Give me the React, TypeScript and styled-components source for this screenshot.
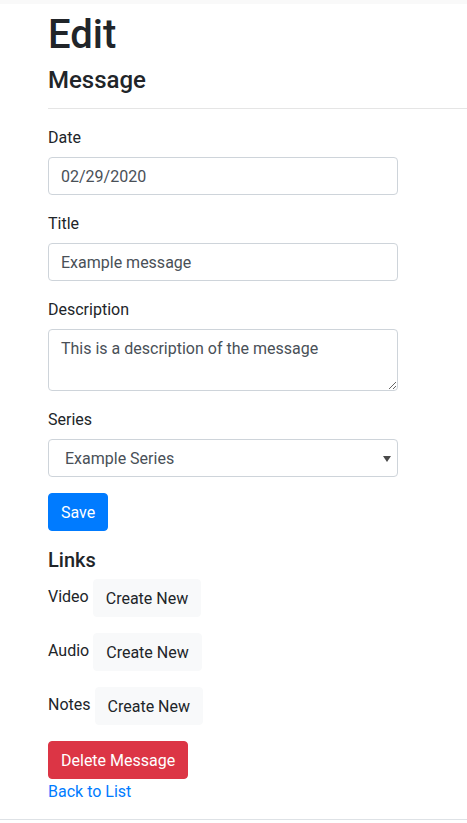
import React from 'react'
import styled, { createGlobalStyle } from 'styled-components'

const GlobalStyle = createGlobalStyle`
    * {
        box-sizing: border-box;
    }

    body {
        margin: 0;
        font-family: Roboto, "Liberation Sans", Arial, sans-serif;
        font-size: 16px;
        line-height: 1.5;
        color: #212529;
        background: #fff;
    }
`

type Variant = 'primary' | 'light' | 'danger'

const variants: Record<Variant, { bg: string; color: string }> = {
    primary: { bg: '#007bff', color: '#fff' },
    light: { bg: '#f8f9fa', color: '#212529' },
    danger: { bg: '#dc3545', color: '#fff' },
}

const TopShadow = styled.div`
    height: 4px;
    background: #f9f9f9;
`

const Main = styled.main`
    padding: 0 0 0 48px;
`

const Title = styled.h1`
    margin: 7px 0 7px;
    font-size: 40px;
    font-weight: 500;
    line-height: 1.2;
`

const Subtitle = styled.h4`
    margin: 0;
    font-size: 24px;
    font-weight: 500;
    line-height: 1.2;
`

const Divider = styled.hr`
    margin: 13px 0 16px;
    border: 0;
    border-top: 1px solid rgba(0, 0, 0, 0.1);
`

const Form = styled.form`
    width: 350px;
`

const Field = styled.div`
    margin-bottom: 16px;
`

const Label = styled.label`
    display: inline-block;
    padding-top: 1px;
    margin-bottom: 7px;
`

const Control = styled.input`
    display: block;
    width: 100%;
    height: 38px;
    padding: 7px 12px 5px;
    font: inherit;
    font-size: 16px;
    line-height: 1.5;
    color: #495057;
    background: #fff;
    border: 1px solid #ced4da;
    border-radius: 4px;
    outline: none;
`

const TextArea = styled(Control).attrs({ as: 'textarea' })`
    height: 62px;
    resize: both;
`

const SelectWrap = styled.div`
    position: relative;
`

const Select = styled(Control).attrs({ as: 'select' })`
    appearance: none;
    -webkit-appearance: none;
    padding-left: 16px;
`

const Caret = styled.span`
    position: absolute;
    right: 7px;
    top: 17px;
    width: 0;
    height: 0;
    border-left: 4px solid transparent;
    border-right: 4px solid transparent;
    border-top: 6px solid #4a4a4a;
    pointer-events: none;
`

const Button = styled.button<{ $variant: Variant }>`
    display: inline-block;
    padding: 7px 12px 5px;
    font: inherit;
    font-size: 16px;
    line-height: 1.5;
    color: ${(p) => variants[p.$variant].color};
    background: ${(p) => variants[p.$variant].bg};
    border: 1px solid ${(p) => variants[p.$variant].bg};
    border-radius: 4px;
    cursor: pointer;
`

const SectionTitle = styled.h5`
    margin: 0 0 8px;
    padding-top: 1px;
    height: 24px;
    font-size: 20px;
    font-weight: 500;
    line-height: 1.2;
`

const LinkRow = styled.div`
    display: flex;
    align-items: flex-start;
    gap: 4px;
    margin-bottom: 16px;
`

const LinkLabel = styled.span`
    margin-top: 6px;
`

const BackLink = styled.a`
    display: block;
    padding-top: 1px;
    height: 24px;
    color: #007bff;
    text-decoration: none;
`

const Footer = styled.footer`
    margin-top: 16px;
    border-top: 1px solid #dee2e6;
`

const linkKinds = ['Video', 'Audio', 'Notes']

export default function App() {
    return (
        <>
            <GlobalStyle />
            <TopShadow />
            <Main>
                <Title>Edit</Title>
                <Subtitle>Message</Subtitle>
                <Divider />

                <Form onSubmit={(e) => e.preventDefault()}>
                    <Field>
                        <Label>Date</Label>
                        <Control readOnly defaultValue="02/29/2020" />
                    </Field>
                    <Field>
                        <Label>Title</Label>
                        <Control readOnly defaultValue="Example message" />
                    </Field>
                    <Field>
                        <Label>Description</Label>
                        <TextArea
                            readOnly
                            defaultValue="This is a description of the message"
                        />
                    </Field>
                    <Field>
                        <Label>Series</Label>
                        <SelectWrap>
                            <Select defaultValue="1">
                                <option value="1">Example Series</option>
                            </Select>
                            <Caret />
                        </SelectWrap>
                    </Field>
                    <Field>
                        <Button $variant="primary" type="submit">
                            Save
                        </Button>
                    </Field>
                </Form>

                <SectionTitle>Links</SectionTitle>
                {linkKinds.map((kind) => (
                    <LinkRow key={kind}>
                        <LinkLabel>{kind}</LinkLabel>
                        <Button $variant="light" type="button">
                            Create New
                        </Button>
                    </LinkRow>
                ))}

                <Button $variant="danger" type="button">
                    Delete Message
                </Button>
                <BackLink href="#">Back to List</BackLink>
            </Main>
            <Footer />
        </>
    )
}
